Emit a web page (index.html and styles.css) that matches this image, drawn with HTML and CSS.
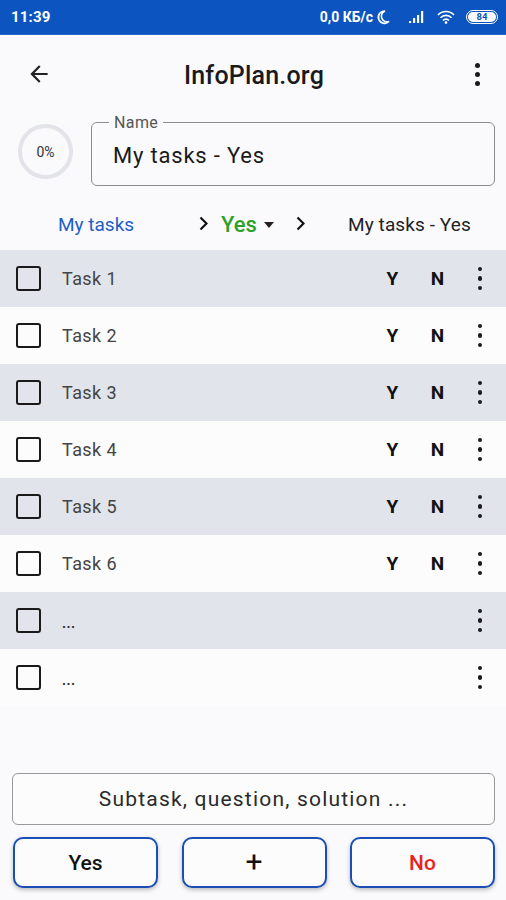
FILE: index.html
```html
<!DOCTYPE html>
<html>
<head>
<meta charset="utf-8">
<link rel="stylesheet" href="styles.css">
</head>
<body>
<div class="app">
  <div class="status">
    <span class="time">11:39</span>
    <div class="sicons">
      <span class="speed">0,0 КБ/с</span>
      <svg class="moon" width="14" height="16" viewBox="0 0 14 16"><path d="M9 2 A6.2 6.2 0 1 0 13 12.5 A5.2 5.2 0 0 1 9 2 Z" fill="none" stroke="#fff" stroke-width="1.6"/></svg>
      <svg class="sig" width="18" height="14" viewBox="0 0 18 14"><rect x="1" y="11" width="2.2" height="2" fill="#fff"/><rect x="5" y="8" width="2.2" height="5" fill="#fff"/><rect x="9" y="5" width="2.2" height="8" fill="#fff"/><rect x="13" y="1" width="2.2" height="12" fill="#fff"/></svg>
      <svg class="wifi" width="18" height="14" viewBox="0 0 18 14"><path d="M1 5 A11 11 0 0 1 17 5" fill="none" stroke="#fff" stroke-width="1.6"/><path d="M3.5 7.8 A7.5 7.5 0 0 1 14.5 7.8" fill="none" stroke="#fff" stroke-width="1.6"/><path d="M6 10.5 A4 4 0 0 1 12 10.5" fill="none" stroke="#fff" stroke-width="1.6"/><circle cx="9" cy="12.6" r="1.3" fill="#fff"/></svg>
      <span class="battery"><span class="bat-in">84</span></span>
    </div>
  </div>

  <div class="toolbar">
    <svg class="back" width="26" height="26" viewBox="0 0 24 24"><path d="M20 11H7.83l5.59-5.59L12 4l-8 8 8 8 1.41-1.41L7.83 13H20v-2z" fill="#222"/></svg>
    <div class="title">InfoPlan.org</div>
    <div class="dots big"><i></i><i></i><i></i></div>
  </div>

  <div class="namerow">
    <div class="progress"><span>0%</span></div>
    <div class="field">
      <span class="label">Name</span>
      <span class="value">My tasks - Yes</span>
    </div>
  </div>

  <div class="crumbs">
    <span class="c1">My tasks</span>
    <svg class="chev" width="9" height="15" viewBox="0 0 9 15"><path d="M1.5 1.5 L7.5 7.5 L1.5 13.5" fill="none" stroke="#111" stroke-width="2.2"/></svg>
    <span class="c2">Yes</span>
    <span class="tri"></span>
    <svg class="chev chev2" width="9" height="15" viewBox="0 0 9 15"><path d="M1.5 1.5 L7.5 7.5 L1.5 13.5" fill="none" stroke="#111" stroke-width="2.2"/></svg>
    <span class="c3">My tasks - Yes</span>
  </div>

  <div class="list">
    <div class="row alt"><span class="cb"></span><span class="txt">Task 1</span><span class="yn">Y</span><span class="yn">N</span><div class="dots"><i></i><i></i><i></i></div></div>
    <div class="row"><span class="cb"></span><span class="txt">Task 2</span><span class="yn">Y</span><span class="yn">N</span><div class="dots"><i></i><i></i><i></i></div></div>
    <div class="row alt"><span class="cb"></span><span class="txt">Task 3</span><span class="yn">Y</span><span class="yn">N</span><div class="dots"><i></i><i></i><i></i></div></div>
    <div class="row"><span class="cb"></span><span class="txt">Task 4</span><span class="yn">Y</span><span class="yn">N</span><div class="dots"><i></i><i></i><i></i></div></div>
    <div class="row alt"><span class="cb"></span><span class="txt">Task 5</span><span class="yn">Y</span><span class="yn">N</span><div class="dots"><i></i><i></i><i></i></div></div>
    <div class="row"><span class="cb"></span><span class="txt">Task 6</span><span class="yn">Y</span><span class="yn">N</span><div class="dots"><i></i><i></i><i></i></div></div>
    <div class="row alt"><span class="cb"></span><span class="txt small">...</span><div class="dots"><i></i><i></i><i></i></div></div>
    <div class="row"><span class="cb"></span><span class="txt small">...</span><div class="dots"><i></i><i></i><i></i></div></div>
  </div>

  <div class="bottom">
    <div class="input">Subtask, question, solution ...</div>
    <div class="buttons">
      <div class="btn">Yes</div>
      <div class="btn plus">+</div>
      <div class="btn no">No</div>
    </div>
  </div>
</div>
</body>
</html>
```

FILE: styles.css
```css
* { box-sizing: border-box; }
html, body { margin: 0; padding: 0; }
body {
  width: 506px;
  height: 900px;
  background: #fafafc;
  font-family: Roboto, "Liberation Sans", sans-serif;
  color: #111;
  overflow: hidden;
}
.app { display: flex; flex-direction: column; height: 900px; }

.status {
  height: 35px;
  background: #0c55c0;
  border-bottom: 1px solid #2a66c8;
  display: flex;
  align-items: center;
  justify-content: space-between;
  padding: 0 8px 0 11px;
  color: #fff;
  font-weight: 700;
}
.time { font-size: 15px; letter-spacing: 0.2px; }
.sicons { display: flex; align-items: center; }
.speed { font-size: 14px; }
.moon { margin-left: 3px; }
.sig { margin-left: 18px; }
.wifi { margin-left: 11px; }
.battery {
  width: 32px; height: 14px;
  border: 1.5px solid #fff;
  border-radius: 7px;
  display: flex; align-items: center; justify-content: center;
  margin-left: 11px;
  padding: 1px;
}
.bat-in {
  background: #fff; color: #0c55c0;
  font-size: 9.5px; font-weight: 700;
  border-radius: 5px;
  width: 100%; height: 100%;
  display: flex; align-items: center; justify-content: center;
  line-height: 1;
}

.toolbar {
  height: 80px;
  display: grid;
  grid-template-columns: 1fr auto 1fr;
  align-items: center;
  padding: 0 24px 0 26px;
}
.back { display: block; margin-top: -2px; }
.title { font-size: 25px; font-weight: 500; color: #1a1a1a; letter-spacing: 0.2px; }
.dots { display: flex; flex-direction: column; gap: 4px; align-items: center; width: 10px; }
.dots i { width: 5px; height: 5px; border-radius: 50%; background: #1a1a1a; display: block; }
.dots.big { gap: 4px; margin-top: -2px; justify-self: end; }

.namerow {
  display: flex;
  align-items: center;
  padding: 1px 11px 0 18px;
  height: 77px;
}
.progress {
  width: 55px; height: 55px;
  border: 4px solid #e2e4ea;
  border-radius: 50%;
  display: flex; align-items: center; justify-content: center;
  font-size: 14px; color: #333;
  margin-right: 18px;
  margin-top: -5px;
}
.field {
  position: relative;
  flex: 1;
  height: 64px;
  border: 1.3px solid #8d8d8d;
  border-radius: 6px;
  display: flex;
  align-items: center;
  padding: 3px 0 0 21px;
}
.label {
  position: absolute;
  top: -8px; left: 17px;
  padding: 0 5px;
  background: #fafafc;
  font-size: 16px;
  letter-spacing: 0.4px;
  color: #555;
  line-height: 16px;
}
.value { font-size: 22px; color: #1a1a1a; letter-spacing: 0.8px; }

.crumbs {
  height: 58px;
  display: flex;
  align-items: center;
  padding: 6px 0 0 58px;
  font-size: 19px;
}
.c1 { color: #1f5ec4; width: 141px; }
.chev { flex: none; margin-right: 13px; margin-top: -2px; }
.c2 { color: #2aa22a; font-size: 22px; font-weight: 500; width: 36px; }
.tri {
  width: 0; height: 0;
  border-left: 5.5px solid transparent;
  border-right: 5.5px solid transparent;
  border-top: 6px solid #222;
  margin: 1px 22px 0 7px;
}
.chev2 { margin-right: 43px; }
.c3 { color: #222; font-size: 19px; letter-spacing: 0.1px; }

.list { display: flex; flex-direction: column; }
.row {
  height: 57px;
  display: flex;
  align-items: center;
  padding: 0 21px 0 16px;
  background: #fcfcfd;
}
.row.alt { background: #e1e4eb; }
.cb {
  width: 25px; height: 25px;
  border: 2.4px solid #1a1a1a;
  border-radius: 3px;
  margin-right: 21px;
  flex: none;
}
.txt { flex: 1; font-size: 18px; color: #444; letter-spacing: 0.4px; }
.txt.small { font-size: 14px; color: #333; font-weight: 700; padding-top: 4px; letter-spacing: 0.5px; }
.yn { font-size: 19px; font-weight: 700; color: #111; width: 45px; text-align: center; }
.yn + .yn { margin-right: 15px; }
.row .dots i { width: 4.5px; height: 4.5px; }
.row .dots { gap: 5px; }

.bottom {
  margin-top: auto;
  padding: 0 11px 12px 12px;
  display: flex; flex-direction: column;
}
.input {
  height: 52px;
  border: 1.3px solid #999;
  border-radius: 6px;
  display: flex; align-items: center; justify-content: center;
  font-size: 21px; color: #2a2a2a;
  letter-spacing: 1.2px;
  background: #fcfcfd;
}
.buttons {
  display: flex;
  justify-content: space-between;
  margin-top: 12px;
  padding: 0 0 0 1px;
}
.btn {
  width: 145px; height: 51px;
  border: 2px solid #1b4fb5;
  border-radius: 10px;
  display: flex; align-items: center; justify-content: center;
  font-size: 21px; font-weight: 500; color: #111;
  background: #fcfcfd;
  box-shadow: 0 2px 4px rgba(0,0,0,0.25);
}
.btn.plus { font-size: 30px; font-weight: 400; padding-bottom: 3px; }
.btn.no { color: #e8251c; }
```
